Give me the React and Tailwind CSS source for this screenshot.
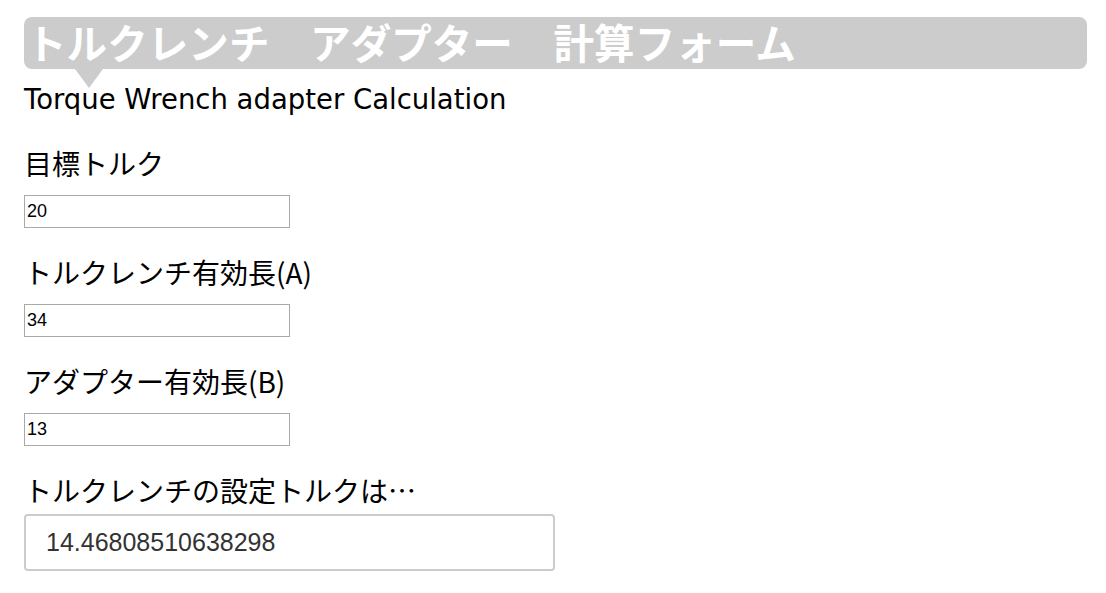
import React, { useState } from 'react';

const jp = "font-['Noto_Sans_CJK_JP','Noto_Sans',sans-serif]";

function Field({ label, value, onChange }) {
  return (
    <div className="mt-[29px]">
      <p className={`${jp} text-[28px] leading-[30px] text-black`}>{label}</p>
      <input
        type="text"
        value={value}
        onChange={e => onChange(e.target.value)}
        className="mt-[17px] block w-[266px] h-[33px] border border-[#a9a9a9] px-[2px] text-[18px] font-['Liberation_Sans',Arial,sans-serif] text-black outline-none"
      />
    </div>
  );
}

export default function App() {
  const [t, setT] = useState('20');
  const [a, setA] = useState('34');
  const [b, setB] = useState('13');
  const res = (Number(t) * Number(a)) / (Number(a) + Number(b));

  return (
    <div className="w-[1106px] h-[593px] bg-white pl-[24px] pr-[19px] pt-[17px] overflow-hidden">
      {/* title bar with speech tail */}
      <div className="relative">
        <h1 className={`${jp} h-[52px] rounded-[8px] bg-[#cccccc] pl-[2px] text-[40.6px] leading-[50px] font-bold text-white whitespace-pre`}>
          トルクレンチ　アダプター　計算フォーム
        </h1>
        <div className="absolute left-[51px] top-[52px] w-0 h-0 border-l-[14px] border-r-[14px] border-t-[19px] border-l-transparent border-r-transparent border-t-[#cccccc]" />
      </div>
      <p className="mt-[12px] font-['DejaVu_Sans',Verdana,sans-serif] text-[27.5px] leading-[36px] text-black">Torque Wrench adapter Calculation</p>

      <div className="pt-[2px]">
        <Field label="目標トルク" value={t} onChange={setT} />
        <Field label="トルクレンチ有効長(A)" value={a} onChange={setA} />
        <Field label="アダプター有効長(B)" value={b} onChange={setB} />
      </div>

      <p className={`${jp} mt-[29px] text-[28px] leading-[30px] text-black`}>トルクレンチの設定トルクは…</p>
      <div className="mt-[9px] w-[531px] h-[57px] rounded-[4px] border-2 border-[#cccccc] pl-[20px] flex items-center text-[25px] font-['Liberation_Sans',Arial,sans-serif] text-[#333333]">
        {String(res)}
      </div>
    </div>
  );
}
